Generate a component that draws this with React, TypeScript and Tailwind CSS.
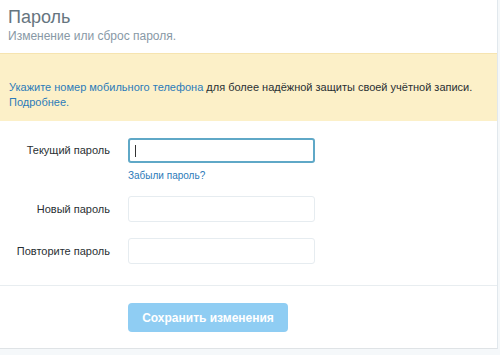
import React from "react";

export default function App() {
  return (
    <div className="w-[500px] h-[355px] bg-[#f5f8fa] overflow-hidden" style={{ fontFamily: '"Liberation Sans", Arial, sans-serif' }}>
      <div className="w-[498px] bg-white border-r border-[#e1e8ed] border-b border-b-[#dfe3e6]">
        <div className="px-[8px] pt-[6px] pb-[10px]">
          <h1 className="text-[18px] leading-[22px] text-[#66757f]">Пароль</h1>
          <p className="text-[12px] leading-[14px] text-[#8899a6] mt-[1px]">Изменение или сброс пароля.</p>
        </div>
        <div className="bg-[#fcf0c8] border-t border-[#f6e4b0] px-[9px] pt-[26px] pb-[11px] text-[11px] leading-[15px] text-[#292f33] whitespace-nowrap">
          <a className="text-[#2b7bb9]">Укажите номер мобильного телефона</a> для более надёжной защиты своей учётной записи.
          <br />
          <a className="text-[#2b7bb9]">Подробнее.</a>
        </div>
        <div className="pt-[17px] pb-[21px] border-b border-[#e8edf0]">
          <div className="flex items-center">
            <label className="w-[110px] text-right text-[11px] text-[#292f33]">Текущий пароль</label>
            <div className="ml-[18px] w-[187px] h-[25px] border-2 border-[#5fa8c7] rounded-[3px] flex items-center pl-[5px]">
              <div className="w-px h-[12px] bg-[#333]" />
            </div>
          </div>
          <div className="ml-[128px] mt-[6px] text-[10px] leading-[14px] text-[#2b7bb9]">Забыли пароль?</div>
          <div className="flex items-center mt-[13px]">
            <label className="w-[110px] text-right text-[11px] text-[#292f33]">Новый пароль</label>
            <div className="ml-[18px] w-[187px] h-[26px] border border-[#e6ecf0] rounded-[3px]" />
          </div>
          <div className="flex items-center mt-[16px]">
            <label className="w-[110px] text-right text-[11px] text-[#292f33]">Повторите пароль</label>
            <div className="ml-[18px] w-[187px] h-[26px] border border-[#e6ecf0] rounded-[3px]" />
          </div>
        </div>
        <div className="pt-[17px] pb-[16px] pl-[128px]">
          <button className="w-[160px] h-[29px] rounded-[4px] bg-[#8fcdf3] text-white font-bold text-[12px]">Сохранить изменения</button>
        </div>
      </div>
    </div>
  );
}
